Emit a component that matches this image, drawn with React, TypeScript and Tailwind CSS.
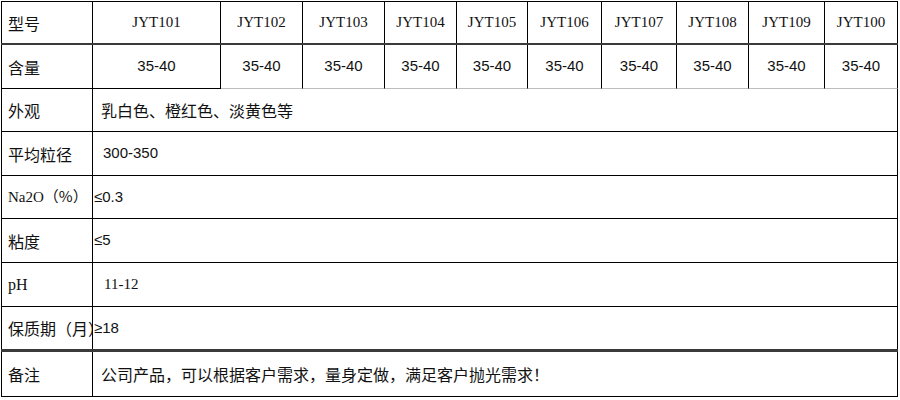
import React from "react";

const codes = ["JYT101", "JYT102", "JYT103", "JYT104", "JYT105", "JYT106", "JYT107", "JYT108", "JYT109", "JYT100"];
const widths = ["w-[128px]", "w-[82px]", "w-[82px]", "w-[72px]", "w-[71px]", "w-[74px]", "w-[75px]", "w-[72px]", "w-[76px]", "w-[73px]"];

const cjk = "font-['Noto_Sans_CJK_SC',sans-serif]";
const serif = "font-['Liberation_Serif','Noto_Sans_CJK_SC',serif]";
const sans = "font-['Liberation_Sans','Noto_Sans_CJK_SC',sans-serif]";

function Label({ children, className = "" }: { children: React.ReactNode; className?: string }) {
  return (
    <div className={`w-[92px] shrink-0 border-l border-r border-black flex items-center pl-[6px] overflow-hidden whitespace-nowrap text-[16px] ${cjk} ${className}`}>
      {children}
    </div>
  );
}

function WideRow({
  label,
  value,
  h,
  border,
}: {
  label: React.ReactNode;
  value: React.ReactNode;
  h: string;
  border: string;
}) {
  return (
    <div className={`flex ${h} ${border}`}>
      <Label>{label}</Label>
      <div className="w-[805px] shrink-0 border-r border-black flex items-center whitespace-nowrap">{value}</div>
    </div>
  );
}

export default function App() {
  return (
    <div className="w-[900px] h-[400px] bg-white text-[#111] pl-[1px] pt-[1px]">
      <div className="w-[897px]">
        {/* Row 1 */}
        <div className="flex h-[44px] border-t border-black border-b-2 border-b-[#3a3a3a]">
          <Label>型号</Label>
          {codes.map((c, i) => (
            <div key={c} className={`${widths[i]} shrink-0 border-r border-black flex items-center justify-center text-[15px] ${serif}`}>
              {c}
            </div>
          ))}
        </div>
        {/* Row 2 */}
        <div className="flex h-[44px]">
          <Label className="border-b border-b-black">含量</Label>
          {codes.map((c, i) => (
            <div
              key={c}
              className={`${widths[i]} shrink-0 border-r border-black flex items-center justify-center text-[15px] ${sans} border-b ${
                i === 0 ? "border-b-black" : "border-b-[#bdbdbd]"
              }`}
            >
              35-40
            </div>
          ))}
        </div>
        <WideRow
          h="h-[43px]"
          border="border-b border-black"
          label="外观"
          value={<span className={`pl-[8px] text-[16px] ${cjk}`}>乳白色、橙红色、淡黄色等</span>}
        />
        <WideRow
          h="h-[44px]"
          border="border-b border-black"
          label="平均粒径"
          value={<span className={`pl-[10px] text-[15px] ${sans}`}>300-350</span>}
        />
        <WideRow
          h="h-[43px]"
          border="border-b border-black"
          label={
            <span className={`text-[15px] ${serif}`}>
              Na2O<span className={`text-[15px] ${cjk}`}>（%）</span>
            </span>
          }
          value={<span className={`pl-[1px] text-[15px] ${sans}`}>≤0.3</span>}
        />
        <WideRow
          h="h-[44px]"
          border="border-b border-black"
          label="粘度"
          value={<span className={`pl-[1px] text-[15px] ${sans}`}>≤5</span>}
        />
        <WideRow
          h="h-[44px]"
          border="border-b border-black"
          label={<span className={`text-[16px] ${serif}`}>pH</span>}
          value={<span className={`pl-[11px] text-[15px] ${serif}`}>11-12</span>}
        />
        <WideRow
          h="h-[45px]"
          border="border-b-[3px] border-[#3a3a3a]"
          label="保质期（月）"
          value={<span className={`pl-[1px] text-[15px] ${sans}`}>≥18</span>}
        />
        <WideRow
          h="h-[45px]"
          border="border-b border-black"
          label="备注"
          value={<span className={`pl-[8px] text-[16px] ${cjk}`}>公司产品，可以根据客户需求，量身定做，满足客户抛光需求！</span>}
        />
      </div>
    </div>
  );
}
